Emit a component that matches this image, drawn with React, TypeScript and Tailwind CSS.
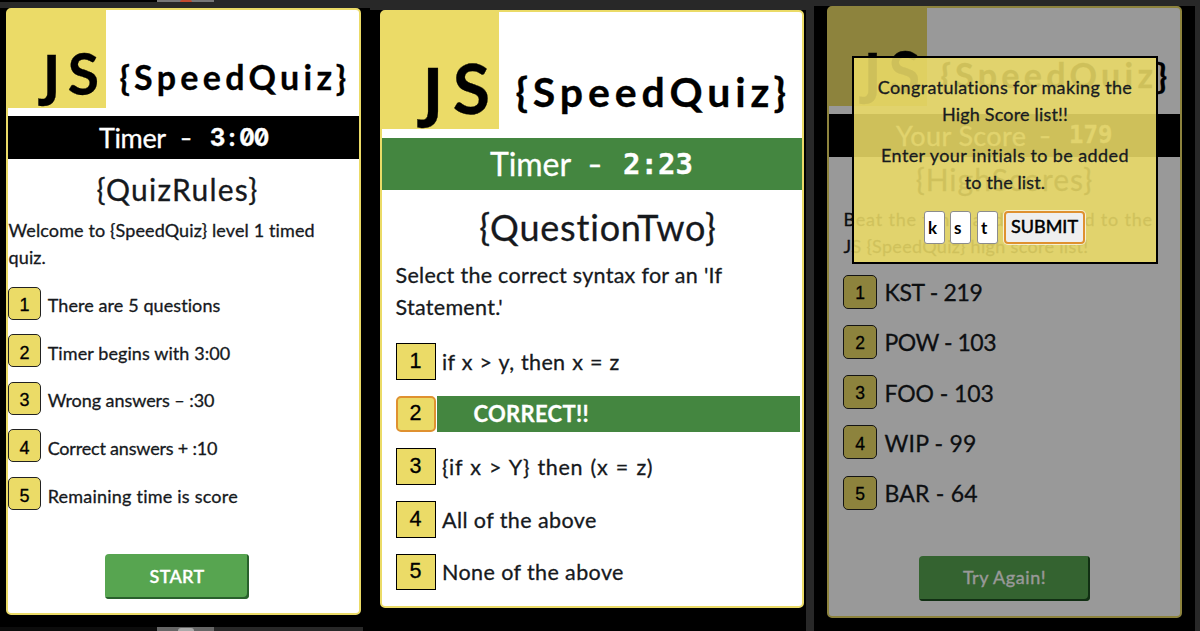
import type { ReactNode } from 'react';

type Line = { text: string; spacing: string };

const rules: Line[] = [
  { text: 'There are 5 questions', spacing: 'tracking-[0.09px]' },
  { text: 'Timer begins with 3:00', spacing: 'tracking-[0.09px]' },
  { text: 'Wrong answers – :30', spacing: 'tracking-[-0.06px]' },
  { text: 'Correct answers + :10', spacing: 'tracking-[-0.19px]' },
  { text: 'Remaining time is score', spacing: 'tracking-[0.22px]' },
];

const answers: Line[] = [
  { text: 'if x > y, then x = z', spacing: 'tracking-[0.3px] [word-spacing:1px]' },
  { text: 'CORRECT!!', spacing: 'tracking-[0.35px]' },
  { text: '{if x > Y} then (x = z)', spacing: 'tracking-[0.65px] [word-spacing:1.3px]' },
  { text: 'All of the above', spacing: 'tracking-[0.42px]' },
  { text: 'None of the above', spacing: 'tracking-[0.4px]' },
];

const scores: Line[] = [
  { text: 'KST - 219', spacing: 'tracking-[-0.34px]' },
  { text: 'POW - 103', spacing: 'tracking-[-0.48px]' },
  { text: 'FOO - 103', spacing: 'tracking-[-0.1px]' },
  { text: 'WIP - 99', spacing: 'tracking-[0.2px]' },
  { text: 'BAR - 64', spacing: 'tracking-[0.2px]' },
];

function SmallHeader() {
  return (
    <header className="flex h-[105.5px] shrink-0 font-bold text-black">
      <div className="flex h-[98px] w-[98px] items-baseline justify-end gap-[7px] bg-[#ebdb67] pt-[35px] pr-[7px] text-[57px] leading-none">
        <span className="font-['Open_Sans',sans-serif] text-[55px]">J</span>
        <span>S</span>
      </div>
      <h1 className="mt-[49.5px] ml-[13.5px] text-[34px] leading-none tracking-[4.3px] whitespace-nowrap">{'{SpeedQuiz}'}</h1>
    </header>
  );
}

function Dash({ className }: { className: string }) {
  return <span className={`text-center font-bold ${className}`}>–</span>;
}

function RulesCard() {
  return (
    <section className="ml-[6px] flex h-[607px] w-[355px] flex-col rounded-[5px] border-2 border-[#ebdb67] bg-white">
      <SmallHeader />
      <div className="flex h-[43.5px] shrink-0 items-center bg-black pl-[91px] text-[27px] leading-none text-white">
        <span className="w-[68px] tracking-[-0.38px]">Timer</span>
        <Dash className="ml-[9px] w-[20px] text-[20px]" />
        <span className="ml-[14px] flex pt-px font-['Inter',sans-serif] text-[24px] font-bold slashed-zero tabular-nums">
          <span className="w-[14.6px] text-center">3</span>
          <span className="w-[14.6px] text-center">:</span>
          <span className="w-[14.6px] text-center">0</span>
          <span className="w-[14.6px] text-center">0</span>
        </span>
      </div>
      <h2 className="mt-[15px] mr-[12px] text-center text-[30px] leading-none tracking-[1.24px]">{'{QuizRules}'}</h2>
      <p className="mt-[12.5px] pl-[0.5px] text-[18px] leading-[27px] tracking-[0.13px]">
        Welcome to {'{SpeedQuiz}'} level 1 timed
        <br />
        quiz.
      </p>
      <ol className="mt-[16px] flex flex-col gap-[14.3px]">
        {rules.map((r, i) => (
          <li key={r.text} className="flex h-[33.3px] items-center text-[18px] leading-none">
            <span className="flex h-[33px] w-[33px] items-center justify-center rounded-[5px] border border-[#222] bg-[#ebdb67] pt-[4px] font-['Liberation_Sans',sans-serif] text-black">
              {i + 1}
            </span>
            <span className={`ml-[6.7px] pt-[4px] whitespace-nowrap ${r.spacing}`}>{r.text}</span>
          </li>
        ))}
      </ol>
      <button className="mt-[44px] mr-[13px] flex h-[45px] w-[144px] shrink-0 items-center justify-center self-center rounded-[4px] bg-[#57a550] pb-[2px] text-[18px] leading-none font-semibold tracking-[0.3px] text-white shadow-[inset_-2px_-2px_0_#29602c]">
        START
      </button>
    </section>
  );
}

function QuestionCard() {
  return (
    <section className="ml-[10px] flex h-[598px] w-[424px] flex-col rounded-[5px] border-2 border-[#ebdb67] bg-white">
      <header className="flex h-[126px] shrink-0 font-bold text-black">
        <div className="flex h-[117px] w-[117px] items-baseline justify-end gap-[9px] bg-[#ebdb67] pt-[42px] pr-[9px] text-[68px] leading-none">
          <span className="font-['Open_Sans',sans-serif] text-[65px]">J</span>
          <span>S</span>
        </div>
        <h1 className="mt-[59px] ml-[16.5px] text-[41px] leading-none tracking-[4.9px] whitespace-nowrap">{'{SpeedQuiz}'}</h1>
      </header>
      <div className="flex h-[52px] shrink-0 items-center bg-[#448640] pl-[108px] text-[32px] leading-none text-white">
        <span className="w-[82px] tracking-[-0.07px]">Timer</span>
        <Dash className="ml-[11px] w-[24px] text-[24px]" />
        <span className="ml-[16px] font-['DejaVu_Sans_Mono',monospace] text-[29px] font-bold">2:23</span>
      </div>
      <h2 className="mt-[19px] ml-[12px] text-center text-[36px] leading-none tracking-[0.8px]">{'{QuestionTwo}'}</h2>
      <p className="mt-[14px] pl-[13.5px] text-[21.5px] leading-[32px] tracking-[0.29px]">
        Select the correct syntax for an 'If
        <br />
        Statement.'
      </p>
      <ol className="mt-[20px] flex flex-col gap-[16.2px] pl-[13.5px]">
        {answers.map((a, i) => {
          const correct = i === 1;
          return (
            <li key={a.text} className="flex h-[36.5px] shrink-0 items-center text-[21.5px] leading-none">
              <span
                className={`flex h-full w-[40px] items-center justify-center bg-[#ebdb67] font-['Liberation_Sans',sans-serif] text-black ${
                  correct ? 'rounded-[5px] border-2 border-[#df9130]' : 'border border-black'
                }`}
              >
                {i + 1}
              </span>
              {correct ? (
                <span className="ml-px flex h-full w-[363px] items-center bg-[#448640] pl-[37px] text-[22px] font-bold tracking-[0.3px] text-white">
                  {a.text}
                </span>
              ) : (
                <span className={`ml-[6.5px] pt-[2px] whitespace-nowrap ${a.spacing}`}>{a.text}</span>
              )}
            </li>
          );
        })}
      </ol>
    </section>
  );
}

function ScoresCard() {
  return (
    <section className="ml-[13px] flex h-[612px] w-[355px] flex-col rounded-[5px] border-2 border-[#ebdb67] bg-white">
      <SmallHeader />
      <div className="flex h-[43.5px] shrink-0 items-center bg-black pl-[67px] text-[27px] leading-none text-white">
        <span className="w-[130px] tracking-[0.39px] whitespace-nowrap">Your Score</span>
        <Dash className="ml-[9px] w-[20px] text-[20px]" />
        <span className="ml-[14px] font-['DejaVu_Sans_Mono',monospace] text-[24px] font-bold">179</span>
      </div>
      <h2 className="mt-[7px] text-center text-[30px] leading-none tracking-[1.01px]">{'{HighScores}'}</h2>
      <p className="mt-[12px] pl-[14.5px] text-[18px] leading-[27px] whitespace-nowrap">
        <span className="tracking-[0.8px]">Beat the timer and get added to the</span>
        <br />
        <span className="tracking-[0.32px]">JS {'{SpeedQuiz}'} high score list!</span>
      </p>
      <ol className="mt-[15px] flex flex-col gap-[16.7px] pl-[14px]">
        {scores.map((s, i) => (
          <li key={s.text} className="flex h-[33.5px] items-center leading-none">
            <span className="flex h-[34px] w-[34px] items-center justify-center rounded-[5px] border border-[#222] bg-[#ebdb67] pt-[4px] font-['Liberation_Sans',sans-serif] text-[17.5px] text-black">
              {i + 1}
            </span>
            <span className={`ml-[7.5px] pt-[2px] text-[23px] whitespace-nowrap ${s.spacing}`}>{s.text}</span>
          </li>
        ))}
      </ol>
      <button className="mt-[47px] flex h-[45px] w-[171px] shrink-0 items-center justify-center self-center rounded-[4px] bg-[#57a550] pb-[3px] text-[18px] leading-none tracking-[0.55px] text-white shadow-[inset_-2px_-2px_0_#1d4f20]">
        Try Again!
      </button>
    </section>
  );
}

function Initial({ children, className }: { children: ReactNode; className: string }) {
  return (
    <span className={`flex h-[33px] w-[21px] items-center rounded-[3px] border border-[#8c8c8c] bg-white pb-px pl-[3px] text-[17px] leading-none font-bold text-black [-webkit-text-stroke:0px] ${className}`}>
      {children}
    </span>
  );
}

function InitialsDialog() {
  return (
    <div className="absolute top-[50px] left-[38px] flex h-[208px] w-[306px] flex-col border-2 border-black bg-[#ebdb67]/88 text-center text-[18px] leading-[27px] text-[#181b1f]">
      <p className="mt-[16px]">
        <span className="tracking-[0.35px]">Congratulations for making the</span>
        <br />
        <span className="tracking-[0.18px]">High Score list!!</span>
      </p>
      <p className="mt-[14px]">
        <span className="tracking-[0.4px]">Enter your initials to be added</span>
        <br />
        <span className="tracking-[0.12px]">to the list.</span>
      </p>
      <div className="mt-[15px] flex pl-[70px]">
        <Initial className="">k</Initial>
        <Initial className="ml-[5px]">s</Initial>
        <Initial className="ml-[6px]">t</Initial>
        <button className="ml-[6px] flex h-[33px] w-[81px] items-center justify-center rounded-[4px] border-2 border-[#df9130] bg-[#efefef] pb-[3px] leading-none text-black shadow-[0_0_0_1px_rgba(255,255,255,0.7)] [-webkit-text-stroke:0.5px]">
          SUBMIT
        </button>
      </div>
    </div>
  );
}

export default function App() {
  return (
    <main className="flex h-[631px] w-[1200px] overflow-hidden bg-[#282828] font-['Lato',sans-serif] text-[#16191d] [-webkit-text-stroke:0.3px]">
      <div className="flex w-[370px] flex-col bg-black">
        <div className="flex h-[8px] shrink-0 items-start bg-[#282828]">
          <div className="h-[2px] w-[157px] bg-black" />
          <div className="flex h-[2px] w-[57px] justify-center bg-[#777]">
            <div className="h-[2px] w-[12px] rounded-t-full bg-[#c4492f]" />
          </div>
        </div>
        <RulesCard />
        <div className="mt-auto flex h-[4px] w-[363px] shrink-0 bg-[#282828]">
          <div className="w-[157px] bg-[#0c0c0c]" />
          <div className="flex w-[57px] items-end justify-center bg-[#666]">
            <div className="h-[3px] w-[16px] rounded-t-full bg-[#aaa]" />
          </div>
        </div>
      </div>
      <div className="flex w-[436px] flex-col bg-black">
        <div className="h-[10px] shrink-0 bg-[#282828]" />
        <QuestionCard />
      </div>
      <div className="ml-[8px] flex w-[381px] flex-col">
        <div className="h-[6px] shrink-0" />
        <div className="relative h-[625px] bg-black">
          <ScoresCard />
          <div className="absolute inset-0 bg-black/40" />
          <InitialsDialog />
        </div>
      </div>
    </main>
  );
}
